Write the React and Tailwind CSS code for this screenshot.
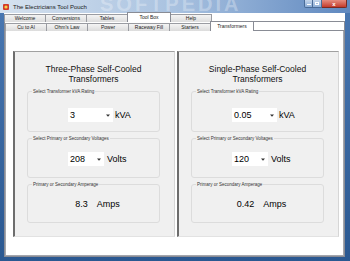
import React from "react";

const row1 = ["Welcome", "Conversions", "Tables", "Tool Box", "Help"];
const row2 = ["Cu to Al", "Ohm's Law", "Power", "Raceway Fill", "Starters", "Transformers"];

function TabRow({ tabs, selected }) {
  return (
    <div className="relative flex items-start h-[9px] border-b border-[#898c95]">
      {tabs.map((t, i) =>
        t === selected ? (
          <div
            key={t}
            className={`relative z-10 -mt-px h-[10px] w-[44px] ${i === 0 ? "" : "-ml-px"} border border-b-0 border-[#898c95] bg-white text-center text-[5px] leading-[9px] text-[#222]`}
          >
            {t}
          </div>
        ) : (
          <div
            key={t}
            className={`h-[8px] w-[42px] ${i === 0 ? "" : "-ml-px"} mt-px border border-b-0 border-[#9a9ca2] bg-gradient-to-b from-[#f4f4f4] to-[#dcdcdc] text-center text-[5px] leading-[7px] text-[#222]`}
          >
            {t}
          </div>
        )
      )}
    </div>
  );
}

function Arrow() {
  return (
    <svg width="4" height="3" viewBox="0 0 4 3" className="block">
      <path d="M0 0.5 L4 0.5 L2 2.8 Z" fill="#333" />
    </svg>
  );
}

function Combo({ value, width }) {
  return (
    <div
      className="flex h-[14px] items-center bg-white pl-[2px] pr-[3px]"
      style={{ width }}
    >
      <span className="flex-1 text-[9px] leading-[14px] text-black">{value}</span>
      <Arrow />
    </div>
  );
}

function Group({ label, height, className = "", children }) {
  return (
    <fieldset
      className={`rounded-[3px] border border-[#dcdcdc] ${className}`}
      style={{ height }}
    >
      <legend className="ml-[4px] px-[1px] text-[4.5px] leading-[5px] text-[#333]">
        {label}
      </legend>
      {children}
    </fieldset>
  );
}

function Panel({ title1, title2, kva, volts, amps }) {
  return (
    <div className="flex h-[186px] w-[162px] flex-col border-t border-l-2 border-r border-b border-t-[#a0a0a0] border-l-[#6d6d6d] border-r-[#d6d6d6] border-b-[#e2e2e2] bg-[#f0f0f0] pl-[12px] pr-[14px] pt-[12px]">
      <div className="text-center text-[8.5px] leading-[10px] text-[#111]">
        <div>{title1}</div>
        <div>{title2}</div>
      </div>
      <Group label="Select Transformer kVA Rating" height={43} className="mt-[5px]">
        <div className="flex items-center pl-[40px] pt-[14px]">
          <Combo value={kva} width={45} />
          <span className="ml-[2px] text-[9px] leading-[14px] text-black">kVA</span>
        </div>
      </Group>
      <Group label="Select Primary or Secondary Voltages" height={42} className="mt-[4px]">
        <div className="flex items-center pl-[40px] pt-[11px]">
          <Combo value={volts} width={36} />
          <span className="ml-[3px] text-[9px] leading-[14px] text-black">Volts</span>
        </div>
      </Group>
      <Group label="Primary or Secondary Amperage" height={41} className="mt-[4px]">
        <div className="flex items-center justify-center gap-[9px] pl-[8px] pt-[12px] text-[9px] leading-[10px] text-black">
          <span>{amps}</span>
          <span>Amps</span>
        </div>
      </Group>
    </div>
  );
}

export default function App() {
  return (
    <div className="relative flex h-[261px] w-[350px] flex-col overflow-hidden bg-gradient-to-b from-[#4a78b2] to-[#2a5891] font-['Liberation_Sans',Arial,sans-serif]">
      {/* title bar */}
      <div className="relative flex h-[13px] shrink-0 items-center overflow-hidden bg-gradient-to-r from-[#d6e2ef] via-[#a9c2e0] to-[#5f88bf]">
        <div className="pointer-events-none absolute left-[100px] top-[-4px] text-[20px] font-bold leading-[17px] tracking-[3px] text-white/30">
          SOFTPEDIA
        </div>
        <svg width="6" height="6" viewBox="0 0 6 6" className="relative ml-[3px] block">
          <rect x="0" y="0" width="6" height="6" rx="1" fill="#d23a2a" />
          <circle cx="3" cy="3" r="1.6" fill="#f6d24a" />
        </svg>
        <span className="relative ml-[4px] text-[6px] leading-[8px] text-[#1a1a1a]">
          The Electricians Tool Pouch
        </span>
        <div className="relative ml-auto mr-[3px] flex self-start">
          <div className="flex h-[8px] w-[9px] items-end justify-center rounded-bl-[2px] border border-t-0 border-[#4a6c98] bg-gradient-to-b from-[#c6d7ec] to-[#8eaed6] pb-[2px]">
            <div className="h-px w-[4px] bg-white" />
          </div>
          <div className="flex h-[8px] w-[9px] items-center justify-center border border-t-0 border-l-0 border-[#4a6c98] bg-gradient-to-b from-[#c6d7ec] to-[#8eaed6]">
            <div className="h-[3px] w-[4px] border border-white" />
          </div>
          <div className="flex h-[8px] w-[25px] items-center justify-center rounded-br-[2px] border border-t-0 border-l-0 border-[#7a2a22] bg-gradient-to-b from-[#e58c80] to-[#c3392b] text-[6px] font-bold leading-[6px] text-white">
            x
          </div>
        </div>
      </div>

      {/* body */}
      <div className="flex min-h-0 flex-1 pl-[4px] pr-[5px] pb-[4px]">
        <div className="flex flex-1 flex-col bg-white">
          <TabRow tabs={row1} selected="Tool Box" />
          <div className="flex min-h-0 flex-1 flex-col border-x border-b border-[#898c95]">
            <TabRow tabs={row2} selected="Transformers" />
            <div className="flex min-h-0 flex-1 gap-[2px] border-x border-b border-[#a3a6ad] pl-[7px] pt-[20px]">
              <Panel
                title1="Three-Phase Self-Cooled"
                title2="Transformers"
                kva="3"
                volts="208"
                amps="8.3"
              />
              <Panel
                title1="Single-Phase Self-Cooled"
                title2="Transformers"
                kva="0.05"
                volts="120"
                amps="0.42"
              />
            </div>
          </div>
        </div>
      </div>
    </div>
  );
}
